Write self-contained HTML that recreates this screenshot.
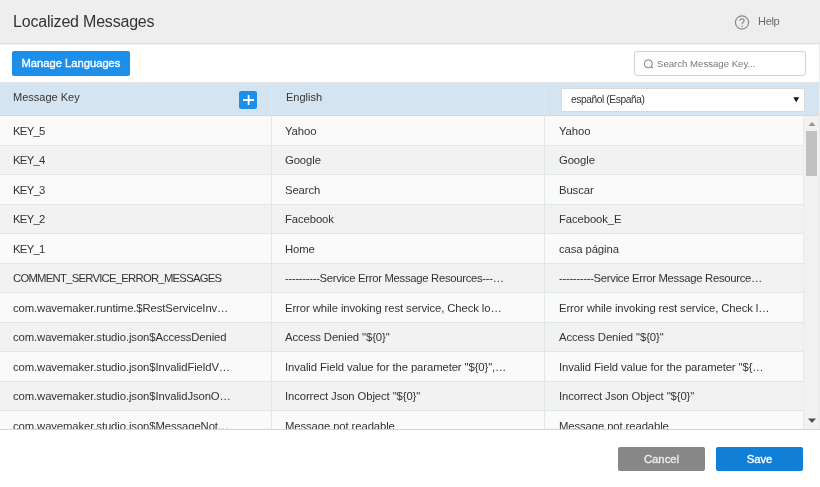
<!DOCTYPE html>
<html><head><meta charset="utf-8">
<style>
*{box-sizing:border-box;margin:0;padding:0}
html,body{width:820px;height:487px;overflow:hidden;background:#fff;font-family:"Liberation Sans",sans-serif;color:#333}
.abs{position:absolute}
#hdr{left:0;top:0;width:820px;height:44px;background:#eeeeee;border-bottom:1px solid #dedede}
#title{left:13px;top:12px;font-size:16px;letter-spacing:-0.2px;line-height:20px;color:#333;white-space:nowrap}
#help{left:758px;top:14px;font-size:11px;letter-spacing:-0.3px;line-height:14px;color:#6a6a6a}
#manage{left:12px;top:51px;width:118px;height:25px;background:#1b8fe9;border-radius:2px;color:#fff;font-weight:normal;-webkit-text-stroke:0.35px #fff;font-size:11.2px;letter-spacing:0px;line-height:25px;text-align:center}
#search{left:634px;top:51px;width:172px;height:25px;border:1px solid #cfcfcf;border-radius:3px;background:#fff}
#search span{position:absolute;left:22px;top:5px;font-size:9.6px;line-height:13px;color:#787878;white-space:nowrap}
#thead{left:0;top:82px;width:820px;height:34px;background:#d4e5f1;border-top:1px solid #e6e6e6;border-bottom:1px solid #cfdbe4}
.th{position:absolute;font-size:11px;line-height:13px;color:#333;white-space:nowrap}
#plus{left:239px;top:91px;width:18px;height:18px;background:#1b8fe9;border-radius:2px}
#sel{left:561px;top:88px;width:244px;height:24px;background:#fff;border:1px solid #d9d9d9}
#sel span{position:absolute;left:9px;top:4px;font-size:10.2px;letter-spacing:-0.4px;line-height:13px;color:#333;white-space:nowrap}
#rows{left:0;top:116px;width:803px;height:313px;overflow:hidden}
.r{position:absolute;left:0;width:803px;height:29.5px;border-bottom:1px solid #e0e7ea}
.r.o{background:#fafafa}.r.e{background:#f2f2f2}
.c{position:absolute;top:0.5px;height:28.5px;line-height:28.5px;font-size:11.3px;letter-spacing:-0.1px;color:#333;white-space:nowrap;}
.c1{left:13px}
.c2{left:285px}
.c3{left:559px}
.vl{position:absolute;top:82px;width:1px;height:347px;background:#dfe6ec}
#sb{left:804px;top:116px;width:16px;height:313px;background:#f1f1f1}
#thumb{left:806px;top:131px;width:11px;height:45px;background:#c1c1c1}
#tbot{left:0;top:429px;width:820px;height:1px;background:#d4d4d4}
.btn{position:absolute;top:447px;height:24px;border-radius:2px;color:#fff;font-weight:normal;-webkit-text-stroke:0.35px currentColor;font-size:11.3px;line-height:24px;text-align:center}
#cancel{left:618px;width:87px;background:#878787;color:#ececec}
#save{left:716px;width:87px;background:#127fd6}
</style></head>
<body><div style="position:absolute;left:0;top:0;width:820px;height:487px;will-change:transform">
<div id="hdr" class="abs"></div>
<div class="abs" style="left:0;top:44px;width:820px;height:1px;background:#f8f8f8"></div>
<div id="title" class="abs">Localized Messages</div>
<svg class="abs" style="left:733px;top:14px" width="18" height="18" viewBox="0 0 18 18">
  <circle cx="9" cy="8.5" r="6.6" fill="none" stroke="#8a8a8a" stroke-width="1.2"/>
  <path d="M6.9 6.8 C6.9 5.4 7.9 4.8 9 4.8 C10.2 4.8 11.1 5.5 11.1 6.6 C11.1 7.9 9.1 8.1 9.1 9.9 L9.1 10.3" fill="none" stroke="#8a8a8a" stroke-width="1.2"/>
  <circle cx="9.1" cy="12.2" r="0.75" fill="#8a8a8a"/>
</svg>
<div id="help" class="abs">Help</div>

<div id="manage" class="abs">Manage Languages</div>
<div id="search" class="abs">
  <svg style="position:absolute;left:8px;top:6px" width="12" height="12" viewBox="0 0 12 12">
    <circle cx="5.3" cy="5.8" r="4" fill="none" stroke="#7a7a7a" stroke-width="1"/>
    <path d="M8.1 8.6 L9.7 10.2" stroke="#7a7a7a" stroke-width="1.1"/>
  </svg>
  <span>Search Message Key...</span>
</div>

<div id="thead" class="abs"></div>
<div class="th" style="left:13px;top:91px">Message Key</div>
<div id="plus" class="abs">
  <svg width="18" height="18" viewBox="0 0 18 18" style="position:absolute;left:0;top:0">
    <path d="M4 9 H15 M9.6 4 V14" stroke="#fff" stroke-width="1.8"/>
  </svg>
</div>
<div class="th" style="left:286px;top:91px">English</div>
<div id="sel" class="abs"><span>español (España)</span>
  <svg style="position:absolute;left:231px;top:7px" width="7" height="7" viewBox="0 0 7 7"><path d="M0.4 1.2 H6.1 L3.25 6.2 Z" fill="#111"/></svg>
</div>

<div id="rows" class="abs">
  <div class="r o" style="top:0px"><div class="c c1" style="letter-spacing:-0.7px">KEY_5</div><div class="c c2">Yahoo</div><div class="c c3">Yahoo</div></div>
  <div class="r e" style="top:29.5px"><div class="c c1" style="letter-spacing:-0.7px">KEY_4</div><div class="c c2">Google</div><div class="c c3">Google</div></div>
  <div class="r o" style="top:59px"><div class="c c1" style="letter-spacing:-0.7px">KEY_3</div><div class="c c2">Search</div><div class="c c3">Buscar</div></div>
  <div class="r e" style="top:88.5px"><div class="c c1" style="letter-spacing:-0.7px">KEY_2</div><div class="c c2">Facebook</div><div class="c c3">Facebook_E</div></div>
  <div class="r o" style="top:118px"><div class="c c1" style="letter-spacing:-0.7px">KEY_1</div><div class="c c2">Home</div><div class="c c3">casa página</div></div>
  <div class="r e" style="top:147.5px"><div class="c c1" style="letter-spacing:-0.75px">COMMENT_SERVICE_ERROR_MESSAGES</div><div class="c c2" style="letter-spacing:-0.3px">----------Service Error Message Resources---…</div><div class="c c3" style="letter-spacing:-0.3px">----------Service Error Message Resource…</div></div>
  <div class="r o" style="top:177px"><div class="c c1">com.wavemaker.runtime.$RestServiceInv…</div><div class="c c2">Error while invoking rest service, Check lo…</div><div class="c c3">Error while invoking rest service, Check l…</div></div>
  <div class="r e" style="top:206.5px"><div class="c c1">com.wavemaker.studio.json$AccessDenied</div><div class="c c2">Access Denied "${0}"</div><div class="c c3">Access Denied "${0}"</div></div>
  <div class="r o" style="top:236px"><div class="c c1">com.wavemaker.studio.json$InvalidFieldV…</div><div class="c c2">Invalid Field value for the parameter "${0}",…</div><div class="c c3">Invalid Field value for the parameter "${…</div></div>
  <div class="r e" style="top:265.5px"><div class="c c1">com.wavemaker.studio.json$InvalidJsonO…</div><div class="c c2">Incorrect Json Object "${0}"</div><div class="c c3">Incorrect Json Object "${0}"</div></div>
  <div class="r o" style="top:295px"><div class="c c1">com.wavemaker.studio.json$MessageNot…</div><div class="c c2">Message not readable</div><div class="c c3">Message not readable</div></div>
</div>
<div class="vl" style="left:271px"></div>
<div class="vl" style="left:544px"></div>
<div class="vl" style="left:803px;top:116px;height:313px;background:#e4eaee"></div>
<div id="sb" class="abs"></div>
<div class="abs" style="left:819px;top:44px;width:1px;height:385px;background:#ebebeb"></div>
<div id="thumb" class="abs"></div>
<svg class="abs" style="left:807px;top:121px" width="10" height="6" viewBox="0 0 10 6"><path d="M1.5 5 L5 1 L8.5 5 Z" fill="#939393"/></svg>
<svg class="abs" style="left:807px;top:418px" width="10" height="6" viewBox="0 0 10 6"><path d="M1 0.5 L9 0.5 L5 5 Z" fill="#505050"/></svg>
<div id="tbot" class="abs"></div>

<div id="cancel" class="btn">Cancel</div>
<div id="save" class="btn">Save</div>
</div></body></html>
